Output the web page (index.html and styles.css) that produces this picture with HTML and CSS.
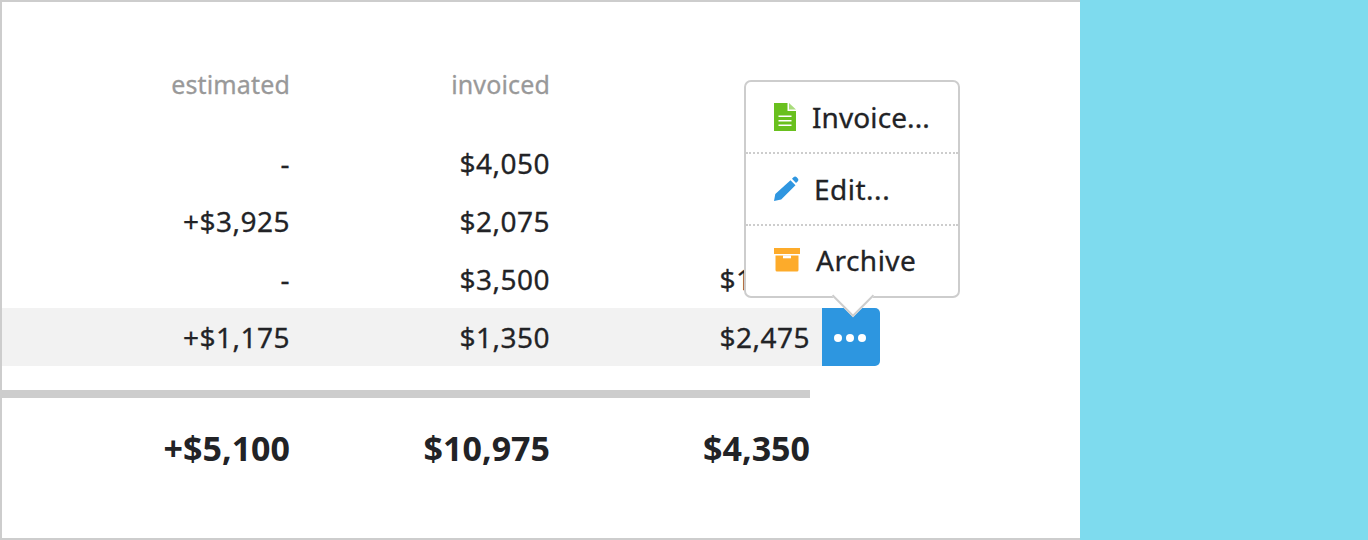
FILE: index.html
```html
<!DOCTYPE html>
<html lang="en">
<head>
<meta charset="utf-8">
<title>Budget table</title>
<link rel="stylesheet" href="styles.css">
</head>
<body>
<div class="stage">
  <main class="card">
    <div class="row head"><span>estimated</span><span>invoiced</span><span></span></div>
    <div class="row first"><span>-</span><span>$4,050</span><span>-</span></div>
    <div class="row"><span>+$3,925</span><span>$2,075</span><span>-</span></div>
    <div class="row"><span>-</span><span>$3,500</span><span>$1,875</span></div>
    <div class="row-wrap">
      <div class="row active"><span>+$1,175</span><span>$1,350</span><span>$2,475</span></div>
      <div class="more">
        <button class="more-btn" aria-label="More"><i></i><i></i><i></i></button>
        <div class="popover">
          <div class="item item-invoice">
            <svg class="icon" width="22" height="28" viewBox="0 0 22 28"><path fill="#69c01e" d="M0 0h13.500v8H22v20H0z"/><path fill="#a9dc7c" d="M15 0l7 6.600h-7z"/><path fill="#fff" d="M4.500 12.500h13v1.600h-13zM4.500 17h13v1.600h-13zM4.500 21.500h13v1.600h-13z"/></svg>
            <span>Invoice...</span>
          </div>
          <div class="item item-edit">
            <svg class="icon" width="26" height="26" viewBox="0 0 26 26"><path fill="#2f96e0" d="M17.500 4.300l5 5L8.200 23.500 1 25l1.300-7zM19 2.800l1.500-1.500c1-1 2.300-1 3.200 0l.9.900c1 1 1 2.200 0 3.200l-1.600 1.500z"/></svg>
            <span>Edit...</span>
          </div>
          <div class="item item-archive">
            <svg class="icon" width="26" height="24" viewBox="0 0 26 24"><path fill="#fdab2a" d="M0 0h26v6H0zM1.500 7.500h23V22a1.500 1.500 0 0 1-1.500 1.500H3A1.500 1.500 0 0 1 1.500 22z"/><path fill="#fff" d="M9 7.500h8v2.800H9z"/></svg>
            <span>Archive</span>
          </div>
        </div>
      </div>
    </div>
    <div class="rule"></div>
    <div class="row total"><span>+$5,100</span><span>$10,975</span><span>$4,350</span></div>
  </main>
</div>
</body>
</html>
```

FILE: styles.css
```css
* { box-sizing: border-box; }
html, body { margin: 0; height: 100%; }
body {
  background: #7edbee;
  font-family: "Noto Sans", "Open Sans", sans-serif;
  color: #222326;
  overflow: hidden;
}
.stage { display: flex; height: 540px; }
.card {
  width: 1080px;
  height: 540px;
  background: #fff;
  border: 2px solid #cdcdcd;
  border-right: 0;
  padding-top: 53px;
}
.row {
  display: grid;
  grid-template-columns: 288px 260px 260px;
  width: 808px;
  height: 58px;
  align-items: center;
  font-size: 28px;
  letter-spacing: 0.5px;
  text-align: right;
  -webkit-text-stroke: 0.3px currentColor;
}
.head { height: 58px; font-size: 25px; letter-spacing: 0.15px; color: #999; }
.first { margin-top: 21px; }
.row-wrap { display: flex; height: 58px; }
.active { width: 820px; padding-right: 12px; background: #f2f2f2; flex: none; }
.more { position: relative; width: 58px; flex: none; }
.more-btn {
  display: flex;
  align-items: center;
  justify-content: center;
  gap: 4px;
  width: 58px;
  height: 58px;
  padding: 2px 2px 0 0;
  border: 0;
  border-radius: 0 5px 5px 0;
  background: #2d96e0;
}
.more-btn i { width: 8px; height: 8px; border-radius: 50%; background: #fff; }
.popover {
  position: absolute;
  left: -78px;
  bottom: 68px;
  width: 216px;
  height: 218px;
  background: #fff;
  border: 2px solid #cdcdcd;
  border-radius: 7px;
  z-index: 2;
}
.popover::after {
  content: "";
  position: absolute;
  left: 92px;
  bottom: -15px;
  width: 28px;
  height: 28px;
  background: #fff;
  border-right: 2px solid #cdcdcd;
  border-bottom: 2px solid #cdcdcd;
  transform: rotate(45deg);
}
.item {
  display: flex;
  align-items: center;
  height: 72px;
  font-size: 28px;
  letter-spacing: 0.1px;
  -webkit-text-stroke: 0.3px currentColor;
  border-bottom: 2px dotted #cdcdcd;
}
.item-invoice { padding-left: 28px; gap: 16px; }
.item-edit { padding: 0 0 1px 27px; gap: 15px; letter-spacing: 0.5px; }
.item-archive { padding-left: 28px; gap: 16px; height: 68px; border-bottom: 0; letter-spacing: 0.5px; }
.rule { width: 808px; height: 8px; margin-top: 24px; background: #cdcdcd; }
.total { margin-top: 21px; font-size: 34px; letter-spacing: 0; font-weight: 700; -webkit-text-stroke: 0; }
```
